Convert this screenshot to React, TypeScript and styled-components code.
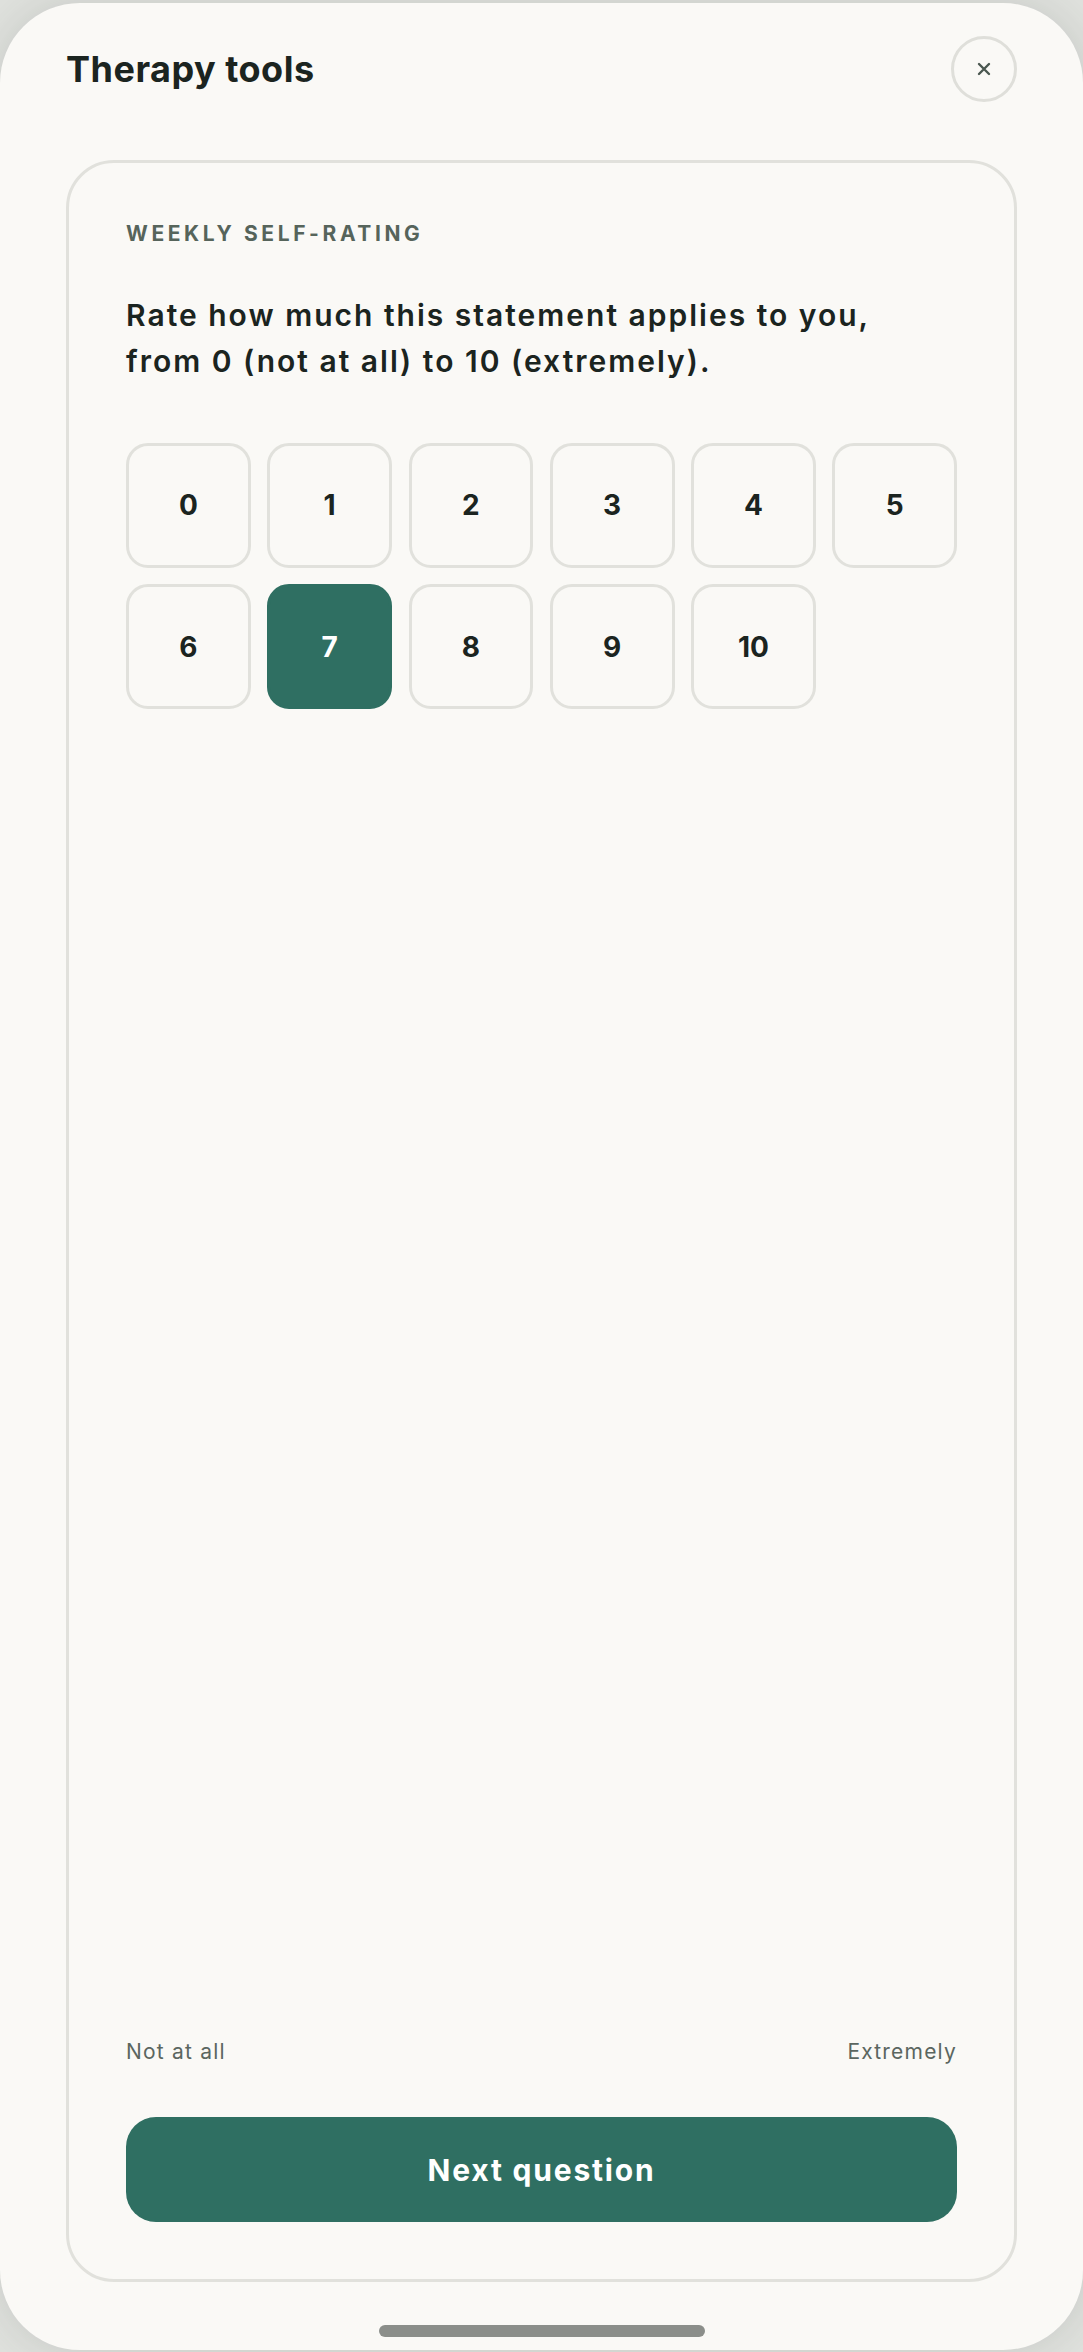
import React, { useState } from "react";
import styled, { createGlobalStyle } from "styled-components";

const GlobalStyle = createGlobalStyle`
  html, body {
    margin: 0;
    padding: 0;
    background: #dfe1dd;
  }
  body {
    font-family: Inter, "Noto Sans", "Liberation Sans", sans-serif;
    -webkit-font-smoothing: antialiased;
  }
  * { box-sizing: border-box; }
`;

const Stage = styled.div`
  width: 1083px;
  height: 2352px;
  padding-top: 3px;
  overflow: hidden;
`;

const Device = styled.div`
  width: 1083px;
  height: 2347px;
  border-radius: 80px;
  background: #faf9f6;
  box-shadow: 0 0 40px rgba(60, 66, 60, 0.14);
  display: flex;
  flex-direction: column;
`;

const Header = styled.header`
  display: flex;
  align-items: center;
  justify-content: space-between;
  height: 66px;
  margin: 33px 66px 0 66px;
`;

const Title = styled.h1`
  margin: 0;
  font-size: 36px;
  line-height: 44px;
  font-weight: 700;
  letter-spacing: 0.5px;
  color: #1b2420;
`;

const CloseButton = styled.button`
  width: 66px;
  height: 66px;
  border-radius: 50%;
  border: 3px solid #dfdfda;
  background: transparent;
  display: flex;
  align-items: center;
  justify-content: center;
  padding: 0;
  cursor: pointer;
`;

const Card = styled.section`
  flex: 1;
  margin: 58px 66px 0 66px;
  border: 3px solid #e1e1dc;
  border-radius: 48px;
  padding: 57px;
  display: flex;
  flex-direction: column;
`;

const Eyebrow = styled.div`
  font-size: 21px;
  line-height: 27px;
  font-weight: 700;
  letter-spacing: 3.6px;
  color: #56645b;
  text-transform: uppercase;
`;

const Prompt = styled.p`
  margin: 46px 0 0 0;
  font-size: 30px;
  line-height: 45.5px;
  font-weight: 600;
  letter-spacing: 2px;
  color: #1b2420;
`;

const Scale = styled.div`
  margin-top: 59px;
  display: grid;
  grid-template-columns: repeat(6, 1fr);
  gap: 16.5px;
`;

const Tile = styled.button<{ $active: boolean }>`
  aspect-ratio: 1;
  border-radius: 22px;
  border: 3px solid ${(p) => (p.$active ? "#2f6f62" : "#e1e1dc")};
  background: ${(p) => (p.$active ? "#2f6f62" : "transparent")};
  color: ${(p) => (p.$active ? "#ffffff" : "#1b2420")};
  font-family: inherit;
  font-size: 28px;
  font-weight: 700;
  display: flex;
  align-items: center;
  justify-content: center;
  padding: 0;
  cursor: pointer;
`;

const Spacer = styled.div`
  flex: 1;
`;

const Anchors = styled.div`
  display: flex;
  justify-content: space-between;
  font-size: 21px;
  line-height: 27px;
  font-weight: 400;
  letter-spacing: 1.2px;
  color: #5b6660;
`;

const PrimaryButton = styled.button`
  margin-top: 52px;
  height: 105px;
  width: 100%;
  border: none;
  border-radius: 30px;
  background: #2f6f62;
  color: #ffffff;
  font-family: inherit;
  font-size: 30px;
  font-weight: 700;
  letter-spacing: 1.8px;
  cursor: pointer;
`;

const HomeBar = styled.div`
  height: 68px;
  display: flex;
  justify-content: center;
  padding-top: 43px;
`;

const HomeIndicator = styled.div`
  width: 326px;
  height: 12px;
  border-radius: 6px;
  background: #8b8e8a;
`;

export default function App() {
  const [value, setValue] = useState<number>(7);
  const options = Array.from({ length: 11 }, (_, i) => i);

  return (
    <>
      <GlobalStyle />
      <Stage>
        <Device>
          <Header>
            <Title>Therapy tools</Title>
            <CloseButton aria-label="Close">
              <svg width="14" height="14" viewBox="0 0 14 14" fill="none">
                <path
                  d="M2 2 L12 12 M12 2 L2 12"
                  stroke="#4a5750"
                  strokeWidth="2.4"
                  strokeLinecap="round"
                />
              </svg>
            </CloseButton>
          </Header>

          <Card>
            <Eyebrow>Weekly self-rating</Eyebrow>
            <Prompt>
              Rate how much this statement applies to you,
              <br />
              from 0 (not at all) to 10 (extremely).
            </Prompt>

            <Scale>
              {options.map((n) => (
                <Tile key={n} $active={n === value} onClick={() => setValue(n)}>
                  {n}
                </Tile>
              ))}
            </Scale>

            <Spacer />

            <Anchors>
              <span>Not at all</span>
              <span>Extremely</span>
            </Anchors>
            <PrimaryButton>Next question</PrimaryButton>
          </Card>

          <HomeBar>
            <HomeIndicator />
          </HomeBar>
        </Device>
      </Stage>
    </>
  );
}
